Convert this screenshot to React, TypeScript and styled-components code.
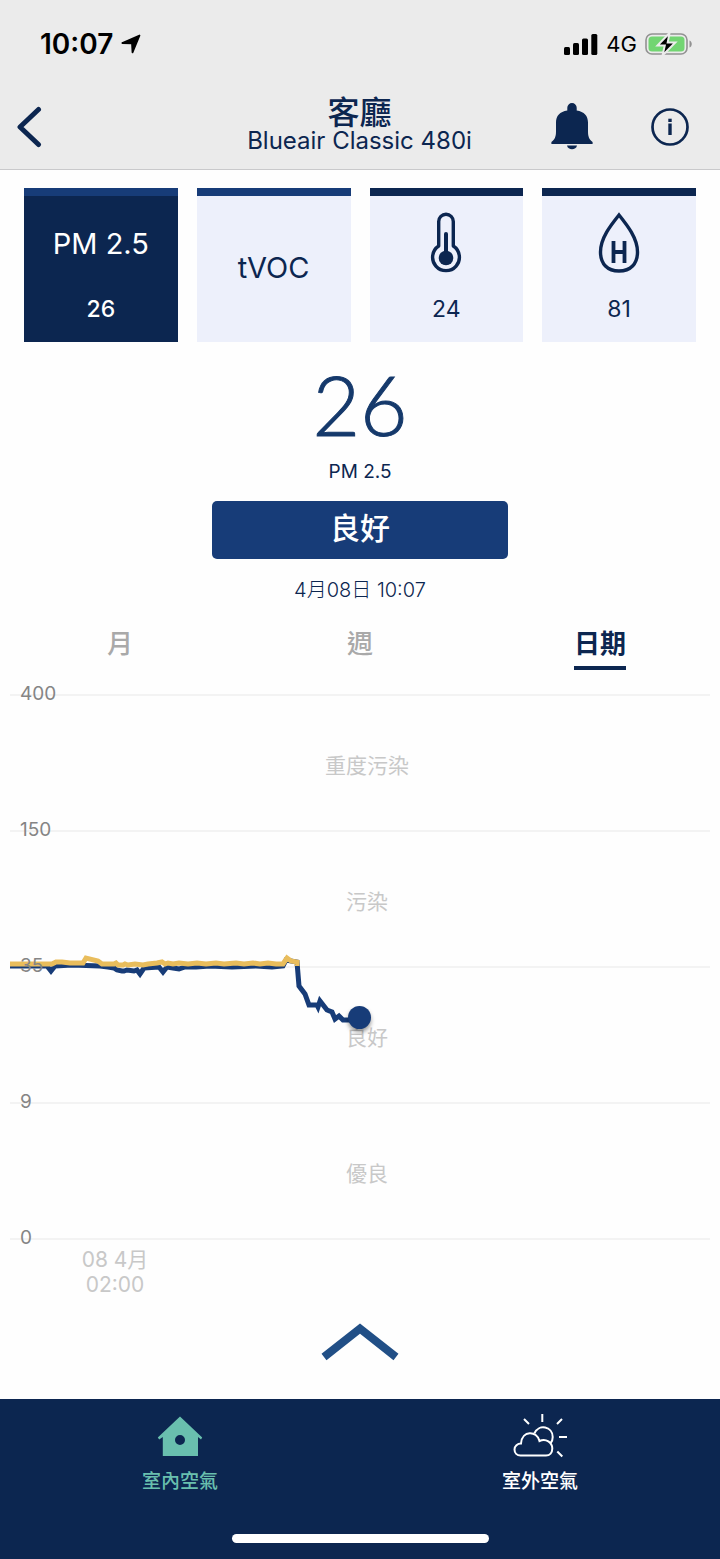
import React, { useState } from "react";
import styled, { createGlobalStyle } from "styled-components";

const navy = "#0c2650";
const blue = "#173c78";
const amber = "#e9bd5c";
const mint = "#69bfae";

const GlobalStyle = createGlobalStyle`
  * { box-sizing: border-box; }
  body {
    margin: 0;
    background: #fefefe;
    color: ${navy};
    font-family: Inter, "Noto Sans CJK TC", sans-serif;
  }
  button { border: 0; padding: 0; background: none; color: inherit; font: inherit; cursor: pointer; }
  a { color: inherit; text-decoration: none; }
  svg { display: block; }
`;

const Page = styled.div`
  min-height: 100vh;
  display: flex;
  flex-direction: column;
`;

const TopArea = styled.header`
  background: #ebebeb;
  border-bottom: 1px solid #c9c9cb;
`;

const StatusBar = styled.div`
  height: 88px;
  padding: 0 28px 0 40px;
  display: flex;
  align-items: center;
  justify-content: space-between;
  color: #000;
`;

const StatusGroup = styled.div`
  display: flex;
  align-items: center;
  gap: 8px;
`;

const Clock = styled.span`
  font-size: 28px;
  line-height: 32px;
  font-weight: 600;
`;

const Network = styled.span`
  font-size: 22px;
  line-height: 32px;
`;

const TitleBar = styled.div`
  height: 81px;
  padding: 0 31px 4px 16px;
  display: grid;
  grid-template-columns: 1fr auto 1fr;
  align-items: center;
`;

const BarActions = styled.div`
  display: flex;
  justify-content: flex-end;
  align-items: center;
  gap: 58px;
`;

const IconButton = styled.button`
  justify-self: start;
  display: flex;
`;

const Titles = styled.div`
  padding: 0 0 4px 14px;
  text-align: center;
`;

const Room = styled.h1`
  margin: 0;
  font-size: 32px;
  line-height: 32px;
  font-weight: 500;
`;

const Model = styled.p`
  margin: 0;
  font-size: 24px;
  line-height: 24px;
  font-weight: 400;
`;

const Cards = styled.div`
  padding: 18px 24px 0;
  display: grid;
  grid-template-columns: repeat(4, 1fr);
  gap: 19px;
`;

const Card = styled.button<{ $selected: boolean; $edge: string }>`
  height: 154px;
  padding-bottom: 4px;
  border-top: 8px solid ${(p) => p.$edge};
  background: ${(p) => (p.$selected ? navy : "#edf0fb")};
  color: ${(p) => (p.$selected ? "#fff" : navy)};
  display: flex;
  flex-direction: column;
  align-items: center;
  justify-content: center;
  gap: 20px;
`;

const CardFace = styled.span`
  height: 64px;
  display: flex;
  align-items: center;
  font-size: 29px;
  font-weight: 400;
`;

const CardValue = styled.span<{ $selected: boolean }>`
  font-size: 23px;
  line-height: 28px;
  font-weight: ${(p) => (p.$selected ? 500 : 400)};
`;

const Reading = styled.section`
  padding-top: 22px;
  display: flex;
  flex-direction: column;
  align-items: center;
`;

const BigValue = styled.div`
  font-family: Lato, sans-serif;
  font-size: 82px;
  line-height: 80px;
  font-weight: 300;
  color: #15396b;
  -webkit-text-stroke: 1px #15396b;
`;

const Unit = styled.div`
  margin-top: 16px;
  font-size: 19px;
  line-height: 24px;
`;

const Quality = styled.div`
  margin-top: 17px;
  width: 41%;
  height: 58px;
  padding-bottom: 8px;
  border-radius: 5px;
  background: ${blue};
  color: #fff;
  display: flex;
  align-items: center;
  justify-content: center;
  font-size: 30px;
  font-weight: 500;
`;

const Stamp = styled.time`
  margin-top: 18px;
  font-size: 20px;
  line-height: 26px;
  font-weight: 300;
`;

const Tabs = styled.div`
  margin-top: 25px;
  display: grid;
  grid-template-columns: repeat(3, 1fr);
  justify-items: center;
`;

const Tab = styled.button<{ $active: boolean }>`
  height: 42px;
  display: flex;
  font-size: 26px;
  line-height: 32px;
  font-weight: ${(p) => (p.$active ? 700 : 500)};
  color: ${(p) => (p.$active ? navy : "#a9a9a9")};
  border-bottom: 4px solid ${(p) => (p.$active ? navy : "transparent")};
`;

const Chart = styled.section`
  position: relative;
  margin: 24px 10px 0;
`;

const Band = styled.div`
  position: relative;
  height: 136px;
  padding: 2px 0 0 14px;
  border-top: 2px solid #f3f3f3;
  display: flex;
  align-items: center;
  justify-content: center;
  font-size: 21px;
  font-weight: 400;
  color: #c8c8c8;
`;

const Baseline = styled.div`
  position: relative;
  border-top: 2px solid #f3f3f3;
`;

const Level = styled.span`
  position: absolute;
  left: 10px;
  top: -14px;
  font-size: 19px;
  line-height: 24px;
  font-weight: 400;
  color: #858585;
  z-index: 2;
`;

const Trace = styled.svg`
  position: absolute;
  left: 0;
  top: 0;
  width: 100%;
  height: 544px;
`;

const NowDot = styled.span`
  position: absolute;
  left: 50%;
  top: 312px;
  width: 23px;
  height: 23px;
  margin-left: -12px;
  border-radius: 50%;
  background: ${blue};
  box-shadow: 0 3px 4px rgba(0, 0, 0, 0.4);
`;

const AxisDate = styled.div`
  width: 30%;
  margin-top: 7px;
  text-align: center;
  font-size: 21px;
  line-height: 25px;
  font-weight: 400;
  color: #c8c8c8;
`;

const Expand = styled.button`
  align-self: center;
  margin: 25px 0 37px;
`;

const BottomBar = styled.footer`
  margin-top: auto;
  background: ${navy};
  display: flex;
  flex-direction: column;
  align-items: center;
`;

const BottomNav = styled.nav`
  width: 100%;
  display: grid;
  grid-template-columns: 1fr 1fr;
`;

const NavLink = styled.a<{ $active?: boolean }>`
  height: 135px;
  padding-top: 13px;
  display: flex;
  flex-direction: column;
  align-items: center;
  gap: 9px;
  font-size: 19px;
  line-height: 24px;
  font-weight: 500;
  color: ${(p) => (p.$active ? mint : "#fff")};
`;

const HomeIndicator = styled.div`
  width: 257px;
  height: 9px;
  margin-bottom: 16px;
  border-radius: 5px;
  background: #fff;
`;

const bluePoints: [number, number][] = [
  [0, 272], [37, 272], [41, 277], [45, 272], [62, 271], [90, 272], [98, 273], [104, 274],
  [107, 276], [112, 277], [114, 277], [117, 276], [124, 277], [127, 276], [130, 280], [134, 274],
  [149, 273], [153, 278], [157, 273], [163, 274], [169, 275], [175, 273], [186, 273], [200, 272],
  [222, 273], [246, 272], [262, 273], [273, 272], [276, 266], [287, 268], [289, 292], [295, 300],
  [299, 311], [307, 311], [308, 313], [310, 307], [317, 316], [322, 318], [325, 325], [329, 322],
  [333, 326], [341, 326], [350, 323],
];

const amberPoints: [number, number][] = [
  [0, 270], [42, 270], [46, 268], [52, 268], [60, 269], [73, 269], [76, 264], [88, 267], [92, 270],
  [104, 270], [106, 269], [108, 271], [113, 271], [115, 270], [118, 271], [125, 270], [133, 271],
  [138, 270], [147, 269], [152, 268], [155, 270], [158, 269], [163, 270], [169, 269], [178, 270],
  [187, 269], [196, 270], [206, 269], [214, 270], [226, 269], [234, 270], [243, 269], [250, 270],
  [258, 269], [266, 270], [273, 270], [277, 264], [281, 267], [287, 268], [287, 272],
];

const toLine = (pts: [number, number][]) => pts.map((p) => p.join(",")).join(" ");

const bands = [
  { level: "400", label: "重度污染" },
  { level: "150", label: "污染" },
  { level: "35", label: "良好" },
  { level: "9", label: "優良" },
];

const ThermometerIcon = () => (
  <svg width="32" height="62" viewBox="0 0 32 62" fill="none" stroke={navy} strokeWidth="3.4">
    <path d="M8.700 34V9.500a7.300 7.300 0 0 1 14.600 0V34a13.400 13.400 0 1 1-14.600 0z" strokeLinejoin="round" />
    <path d="M16 22v24" strokeWidth="4" strokeLinecap="round" />
    <circle cx="16" cy="46" r="7.3" fill={navy} stroke="none" />
  </svg>
);

const HumidityIcon = () => (
  <svg width="42" height="62" viewBox="0 0 42 62" fill="none" stroke={navy}>
    <path d="M21 3C13 13 2.500 26 2.500 40c0 12 7 19 18.500 19s18.500-7 18.500-19C39.500 26 29 13 21 3z" strokeWidth="3.400" />
    <path d="M15.500 29v22M26.500 29v22M15.500 40h11" strokeWidth="3.800" />
  </svg>
);

const cards = [
  { id: "pm", name: "PM 2.5", face: "PM 2.5", value: "26", edge: blue },
  { id: "tvoc", name: "tVOC", face: "tVOC", value: "", edge: blue },
  { id: "temperature", name: "溫度", face: <ThermometerIcon />, value: "24", edge: navy },
  { id: "humidity", name: "濕度", face: <HumidityIcon />, value: "81", edge: navy },
];

const tabs = ["月", "週", "日期"];

export default function App() {
  const [card, setCard] = useState("pm");
  const [tab, setTab] = useState("日期");

  return (
    <Page>
      <GlobalStyle />
      <TopArea>
        <StatusBar>
          <StatusGroup>
            <Clock>10:07</Clock>
            <svg width="20" height="20" viewBox="0 0 20 20">
              <path d="M18.500 1.500 1.300 9l9.700.3.500 9z" stroke="#000" strokeWidth="1.800" strokeLinejoin="round" />
            </svg>
          </StatusGroup>
          <StatusGroup>
            <svg width="34" height="21" viewBox="0 0 34 21">
              <rect x="0" y="13" width="6" height="8" rx="1.500" />
              <rect x="9" y="9" width="6" height="12" rx="1.500" />
              <rect x="18" y="4.500" width="6" height="16.500" rx="1.500" />
              <rect x="27.300" y="0" width="6" height="21" rx="1.500" />
            </svg>
            <Network>4G</Network>
            <svg width="47" height="24" viewBox="0 0 47 24">
              <rect x="1" y="2" width="41" height="20" rx="6" fill="none" stroke="#929292" strokeWidth="1.600" />
              <rect x="3.500" y="4.500" width="36" height="15" rx="3.500" fill="#72d572" />
              <path d="M44.500 8.500c3 1 3 6 0 7z" fill="#929292" />
              <path d="M24.500 1 12.500 13.500h7.300L17.500 23.500l12.800-13h-7.600z" stroke="#ebebeb" strokeWidth="2" />
            </svg>
          </StatusGroup>
        </StatusBar>
        <TitleBar>
          <IconButton aria-label="返回">
            <svg width="26" height="42" viewBox="0 0 26 42" fill="none" stroke={navy} strokeWidth="5" strokeLinecap="round" strokeLinejoin="round">
              <path d="M22.500 3.500 4 21l18.500 17.500" />
            </svg>
          </IconButton>
          <Titles>
            <Room>客廳</Room>
            <Model>Blueair Classic 480i</Model>
          </Titles>
          <BarActions>
            <IconButton aria-label="通知">
              <svg width="42" height="47" viewBox="0 0 42 47" fill={navy}>
                <path d="M16.300 7.500V4.700a4.700 4.700 0 0 1 9.400 0v2.800c7.500 1 11.300 5.500 11.300 12v9c0 5 1.200 8 4.600 10.500v2H.4v-2C3.800 36.500 5 33.500 5 28.500v-9c0-6.500 3.800-11 11.300-12z" />
                <path d="M16 42.500h10c-.8 5-9.200 5-10 0z" />
              </svg>
            </IconButton>
            <IconButton aria-label="資訊">
              <svg width="38" height="38" viewBox="0 0 38 38" fill="none" stroke={navy}>
                <circle cx="19" cy="19" r="17.500" strokeWidth="2.700" />
                <path d="M19 15.500V27" strokeWidth="3.400" />
                <path d="M19 10.700V14" strokeWidth="3.400" />
              </svg>
            </IconButton>
          </BarActions>
        </TitleBar>
      </TopArea>

      <Cards>
        {cards.map((c) => (
          <Card key={c.id} aria-label={c.name} $selected={card === c.id} $edge={c.edge} onClick={() => setCard(c.id)}>
            <CardFace>{c.face}</CardFace>
            {c.value && <CardValue $selected={card === c.id}>{c.value}</CardValue>}
          </Card>
        ))}
      </Cards>

      <Reading>
        <BigValue>26</BigValue>
        <Unit>PM 2.5</Unit>
        <Quality>良好</Quality>
        <Stamp>4月08日 10:07</Stamp>
      </Reading>

      <Tabs>
        {tabs.map((t) => (
          <Tab key={t} $active={tab === t} onClick={() => setTab(t)}>
            {t}
          </Tab>
        ))}
      </Tabs>

      <Chart>
        {bands.map((b) => (
          <Band key={b.level}>
            <Level>{b.level}</Level>
            {b.label}
          </Band>
        ))}
        <Baseline>
          <Level>0</Level>
        </Baseline>
        <Trace viewBox="0 0 700 544" preserveAspectRatio="none" fill="none" strokeWidth="5">
          <polyline points={toLine(bluePoints)} stroke={blue} />
          <polyline points={toLine(amberPoints)} stroke={amber} />
        </Trace>
        <NowDot />
        <AxisDate>
          08 4月
          <br />
          02:00
        </AxisDate>
      </Chart>

      <Expand aria-label="展開">
        <svg width="78" height="40" viewBox="0 0 78 40" fill="none" stroke="#214f86" strokeWidth="8">
          <path d="M3 35 39 6.500 75 35" />
        </svg>
      </Expand>

      <BottomBar>
        <BottomNav>
          <NavLink href="#indoor" $active>
            <svg width="46" height="49" viewBox="0 0 46 49">
              <path fill={mint} fillRule="evenodd" d="M23 4.500 45.200 25.500l-1.200 2-3-2.600V44H5.800V24.900l-3.600 2.600-1.400-2zM23 23a5 5 0 1 0 0 10 5 5 0 0 0 0-10z" />
            </svg>
            室內空氣
          </NavLink>
          <NavLink href="#outdoor">
            <svg width="54" height="49" viewBox="0 0 54 49" fill="none" stroke="#fff" strokeWidth="2">
              <path d="M7.500 43.500C4 43.500 1.500 41 1.500 37.500 1.500 34 4.500 31.500 8 31.500 9 18 24 18.500 26.500 29c6.500-3 12.800 1.500 12.800 7.500 0 4-2.500 7-6.300 7z" />
              <path d="M21.300 21.500c4.500-10 18.400-7 18.400 3.500 0 2.500-.7 4.500-2 6M29.300 10V2M16 12l-5-5M44 12l5-5M46 25h8M44.300 39.500l5 5" />
            </svg>
            室外空氣
          </NavLink>
        </BottomNav>
        <HomeIndicator />
      </BottomBar>
    </Page>
  );
}
